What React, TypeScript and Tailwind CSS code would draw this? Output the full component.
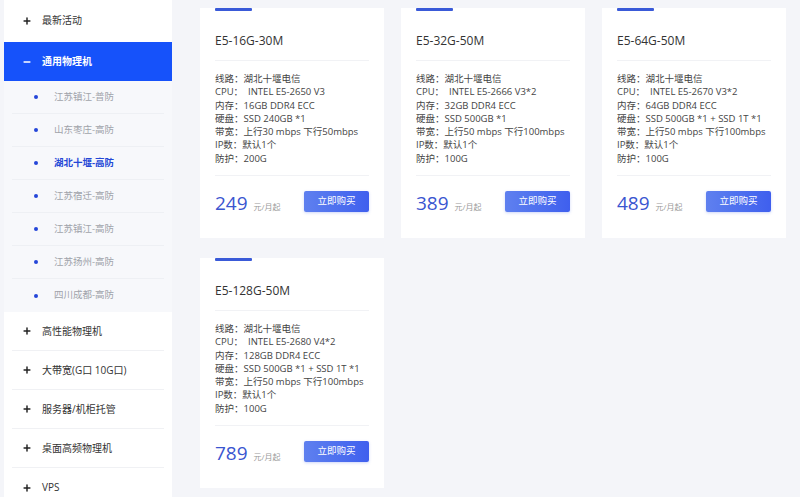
import { Minus, Plus } from 'lucide-react';

const subItems = [
    { name: '江苏镇江-普防' },
    { name: '山东枣庄-高防' },
    { name: '湖北十堰-高防', active: true },
    { name: '江苏宿迁-高防' },
    { name: '江苏镇江-高防' },
    { name: '江苏扬州-高防' },
    { name: '四川成都-高防' },
];

const moreItems = ['高性能物理机', '大带宽(G口 10G口)', '服务器/机柜托管', '桌面高频物理机', 'VPS'];

const plans = [
    {
        title: 'E5-16G-30M',
        cpu: 'INTEL E5-2650 V3',
        ram: '16GB DDR4 ECC',
        disk: 'SSD 240GB *1',
        bw: '上行30 mbps 下行50mbps',
        ddos: '200G',
        price: 249,
    },
    {
        title: 'E5-32G-50M',
        cpu: 'INTEL E5-2666 V3*2',
        ram: '32GB DDR4 ECC',
        disk: 'SSD 500GB *1',
        bw: '上行50 mbps 下行100mbps',
        ddos: '100G',
        price: 389,
    },
    {
        title: 'E5-64G-50M',
        cpu: 'INTEL E5-2670 V3*2',
        ram: '64GB DDR4 ECC',
        disk: 'SSD 500GB *1 + SSD 1T *1',
        bw: '上行50 mbps 下行100mbps',
        ddos: '100G',
        price: 489,
    },
    {
        title: 'E5-128G-50M',
        cpu: 'INTEL E5-2680 V4*2',
        ram: '128GB DDR4 ECC',
        disk: 'SSD 500GB *1 + SSD 1T *1',
        bw: '上行50 mbps 下行100mbps',
        ddos: '100G',
        price: 789,
    },
];

function PlanCard({ plan }: { plan: (typeof plans)[number] }) {
    return (
        <div className="bg-white h-[230px] px-[15px]">
            <div className="h-[3px] w-[37px] bg-[#3a5ad8] rounded-[1px]" />
            <h3 className="mt-[20px] text-[12px] leading-[20px] text-[#333]">{plan.title}</h3>
            <div className="mt-[9px] border-t border-[#f1f2f5]" />
            <ul className="mt-[11px] text-[9.5px] leading-[13.3px] text-[#444] whitespace-nowrap">
                <li>线路：湖北十堰电信</li>
                <li>CPU：&nbsp; {plan.cpu}</li>
                <li>内存：{plan.ram}</li>
                <li>硬盘：{plan.disk}</li>
                <li>带宽：{plan.bw}</li>
                <li>IP数：默认1个</li>
                <li>防护：{plan.ddos}</li>
            </ul>
            <div className="mt-[10px] border-t border-[#f1f2f5]" />
            <div className="mt-[14px] flex items-center justify-between">
                <div className="flex items-baseline gap-[6px] pt-[4px]">
                    <span className="text-[19px] leading-none text-[#3a55d0]">{plan.price}</span>
                    <span className="text-[8px] text-[#999]">元/月起</span>
                </div>
                <button className="w-[65px] h-[21px] rounded-[2px] bg-gradient-to-r from-[#5f80ef] to-[#3f5fee] text-white text-[9.5px] shadow-[0_1px_3px_rgba(60,90,230,0.25)]">
                    立即购买
                </button>
            </div>
        </div>
    );
}

export default function App() {
    return (
        <div
            className="w-[800px] h-[497px] overflow-hidden bg-[#f4f5f9] flex"
            style={{ fontFamily: '"Open Sans", "Noto Sans CJK SC", sans-serif' }}
        >
            <aside className="ml-[4px] w-[168px] shrink-0 bg-white">
                <div className="h-[41px] flex items-center pl-[18px] gap-[10px] text-[10px] text-[#333]">
                    <Plus size={10} strokeWidth={3.5} className="text-[#222]" />
                    最新活动
                </div>
                <div className="mt-[1px] h-[39px] flex items-center pl-[18px] gap-[10px] bg-[#1652fa] text-white text-[10px] font-bold">
                    <Minus size={10} strokeWidth={3.5} />
                    通用物理机
                </div>
                <ul className="bg-[#f7f8fb] px-[8px]">
                    {subItems.map((s, i) => (
                        <li
                            key={s.name}
                            className={`h-[33px] flex items-center pl-[22px] gap-[16px] text-[9.5px] ${i < subItems.length - 1 ? 'border-b border-[#eef0f4]' : ''} ${s.active ? 'text-[#2347d6] font-bold' : 'text-[#a0a3aa]'}`}
                        >
                            <span className="w-[4px] h-[4px] rounded-full bg-[#2446d8]" />
                            {s.name}
                        </li>
                    ))}
                </ul>
                <ul className="px-[8px]">
                    {moreItems.map((m, i) => (
                        <li
                            key={m}
                            className={`h-[39px] flex items-center pl-[10px] gap-[10px] text-[10px] text-[#333] ${i < moreItems.length - 1 ? 'border-b border-[#f0f1f4]' : ''}`}
                        >
                            <Plus size={10} strokeWidth={3.5} className="text-[#222]" />
                            {m}
                        </li>
                    ))}
                </ul>
            </aside>
            <main className="pl-[28px] pt-[8px]">
                <div className="grid grid-cols-[184px_184px_184px] gap-x-[17px] gap-y-[20px]">
                    {plans.map((p) => (
                        <PlanCard key={p.title} plan={p} />
                    ))}
                </div>
            </main>
        </div>
    );
}
